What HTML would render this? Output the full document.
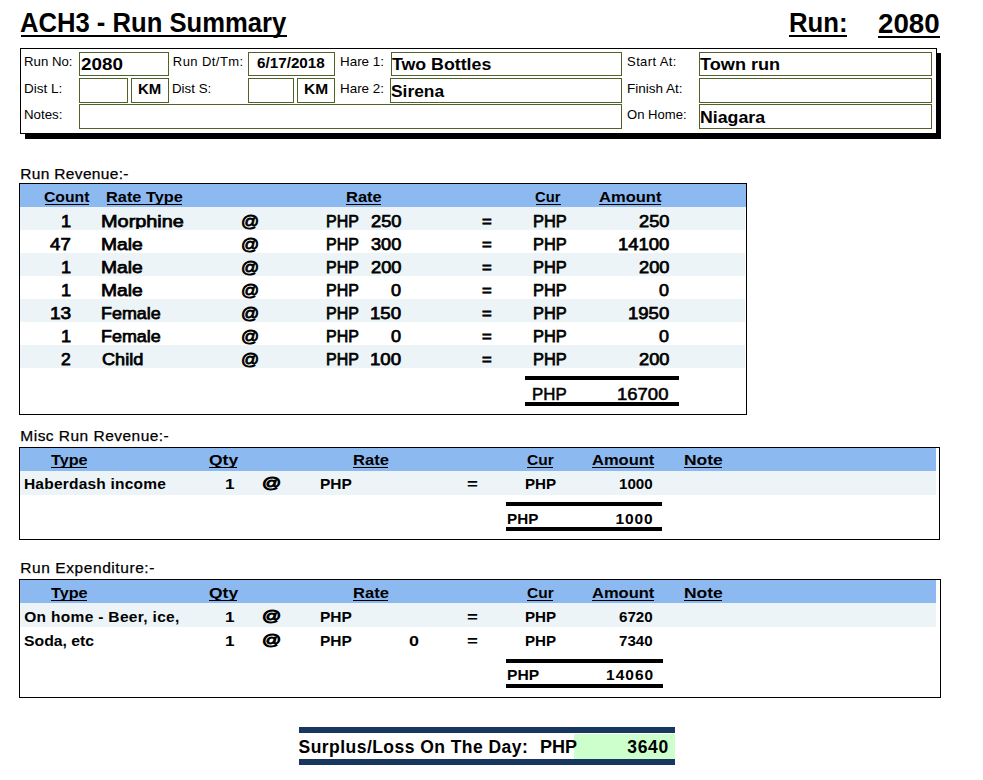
<!DOCTYPE html>
<html><head><meta charset="utf-8"><style>
html,body{margin:0;padding:0;background:#fff;width:983px;height:780px;overflow:hidden;position:relative}
div{position:absolute;box-sizing:border-box}
.t{transform-origin:0 0;font-family:"Liberation Sans",sans-serif;line-height:1;white-space:pre;color:#000}
.ib{border:1px solid #4f6228}
.tb{border:1px solid #000}
.hb{border:1px solid #000;background:#fff}
.u{background:#000}
</style></head><body>
<div class="f" style="left:21px;top:35px;width:266px;height:2px;background:#000"></div>
<div class="f" style="left:789px;top:35px;width:58px;height:2px;background:#000"></div>
<div class="f" style="left:878px;top:36px;width:62px;height:2px;background:#000"></div>
<div class="f" style="left:25px;top:53px;width:916px;height:86px;background:#000"></div>
<div class="hb" style="left:20px;top:48px;width:917px;height:86px"></div>
<div class="ib" style="left:79px;top:52px;width:90px;height:24px"></div>
<div class="ib" style="left:248px;top:52px;width:87px;height:24px"></div>
<div class="ib" style="left:391px;top:52px;width:231px;height:24px"></div>
<div class="ib" style="left:699px;top:52px;width:233px;height:24px"></div>
<div class="ib" style="left:79px;top:78px;width:49px;height:25px"></div>
<div class="ib" style="left:131px;top:78px;width:38px;height:25px"></div>
<div class="ib" style="left:248px;top:78px;width:46px;height:25px"></div>
<div class="ib" style="left:297px;top:78px;width:38px;height:25px"></div>
<div class="ib" style="left:390px;top:78px;width:232px;height:25px"></div>
<div class="ib" style="left:699px;top:78px;width:233px;height:25px"></div>
<div class="ib" style="left:79px;top:104px;width:543px;height:25px"></div>
<div class="ib" style="left:699px;top:104px;width:233px;height:25px"></div>
<div class="tb" style="left:19px;top:183px;width:728px;height:232px"></div>
<div class="f" style="left:20px;top:184px;width:726px;height:23px;background:#8db9f1"></div>
<div class="f" style="left:20px;top:207px;width:725px;height:23px;background:#ecf4f7"></div>
<div class="f" style="left:20px;top:253px;width:725px;height:23px;background:#ecf4f7"></div>
<div class="f" style="left:20px;top:299px;width:725px;height:23px;background:#ecf4f7"></div>
<div class="f" style="left:20px;top:345px;width:725px;height:23px;background:#ecf4f7"></div>
<div class="f" style="left:525px;top:376px;width:154px;height:4px;background:#000"></div>
<div class="f" style="left:525px;top:402px;width:154px;height:4px;background:#000"></div>
<div class="tb" style="left:19px;top:447px;width:921px;height:93px"></div>
<div class="f" style="left:20px;top:448px;width:916px;height:23px;background:#8db9f1"></div>
<div class="f" style="left:20px;top:471px;width:916px;height:24px;background:#ecf4f7"></div>
<div class="f" style="left:506px;top:502px;width:156px;height:4px;background:#000"></div>
<div class="f" style="left:506px;top:527px;width:156px;height:4px;background:#000"></div>
<div class="tb" style="left:19px;top:579px;width:922px;height:119px"></div>
<div class="f" style="left:20px;top:580px;width:916px;height:23px;background:#8db9f1"></div>
<div class="f" style="left:20px;top:603px;width:916px;height:24px;background:#ecf4f7"></div>
<div class="f" style="left:506px;top:659px;width:157px;height:4px;background:#000"></div>
<div class="f" style="left:506px;top:684px;width:157px;height:4px;background:#000"></div>
<div class="f" style="left:299px;top:727px;width:376px;height:6px;background:#17375e"></div>
<div class="f" style="left:299px;top:759px;width:376px;height:6px;background:#17375e"></div>
<div class="f" style="left:574px;top:734px;width:101px;height:25px;background:#ccffcc"></div>
<div class="t" id="t0" style="left:20.17px;top:8.72px;font-size:27.50px;font-weight:bold;transform:scaleX(0.9315);">ACH3 - Run Summary</div>
<div class="t" id="t1" style="left:788.97px;top:8.72px;font-size:27.50px;font-weight:bold;transform:scaleX(0.9351);">Run:</div>
<div class="t" id="t2" style="left:878.33px;top:9.72px;font-size:27.50px;font-weight:bold;transform:scaleX(1.0083);">2080</div>
<div class="t" id="t3" style="left:24.38px;top:55.00px;font-size:13.00px;transform:scaleX(1.0167);">Run No:</div>
<div class="t" id="t4" style="left:24.41px;top:82.00px;font-size:13.00px;transform:scaleX(1.0394);">Dist L:</div>
<div class="t" id="t5" style="left:23.56px;top:108.00px;font-size:13.00px;transform:scaleX(1.0205);">Notes:</div>
<div class="t" id="t6" style="left:172.85px;top:55.00px;font-size:13.00px;letter-spacing:0.426px;">Run Dt/Tm:</div>
<div class="t" id="t7" style="left:171.91px;top:82.00px;font-size:13.00px;transform:scaleX(1.0245);">Dist S:</div>
<div class="t" id="t8" style="left:340.05px;top:55.00px;font-size:13.00px;transform:scaleX(1.0308);">Hare 1:</div>
<div class="t" id="t9" style="left:340.05px;top:82.00px;font-size:13.00px;transform:scaleX(1.0308);">Hare 2:</div>
<div class="t" id="t10" style="left:627.11px;top:55.00px;font-size:13.00px;letter-spacing:0.366px;">Start At:</div>
<div class="t" id="t11" style="left:627.01px;top:82.00px;font-size:13.00px;transform:scaleX(1.0393);">Finish At:</div>
<div class="t" id="t12" style="left:627.03px;top:108.00px;font-size:13.00px;transform:scaleX(1.0064);">On Home:</div>
<div class="t" id="t13" style="left:81.05px;top:55.61px;font-size:17.00px;font-weight:bold;transform:scaleX(1.1073);">2080</div>
<div class="t" id="t14" style="left:137.97px;top:81.30px;font-size:15.00px;font-weight:bold;transform:scaleX(0.9985);">KM</div>
<div class="t" id="t15" style="left:256.83px;top:55.30px;font-size:15.00px;font-weight:bold;transform:scaleX(1.0157);">6/17/2018</div>
<div class="t" id="t16" style="left:303.89px;top:81.30px;font-size:15.00px;font-weight:bold;transform:scaleX(1.0354);">KM</div>
<div class="t" id="t17" style="left:391.72px;top:55.61px;font-size:17.00px;font-weight:bold;transform:scaleX(1.0446);">Two Bottles</div>
<div class="t" id="t18" style="left:390.63px;top:82.61px;font-size:17.00px;font-weight:bold;transform:scaleX(1.0214);">Sirena</div>
<div class="t" id="t19" style="left:700.48px;top:55.61px;font-size:17.00px;font-weight:bold;transform:scaleX(1.0658);">Town run</div>
<div class="t" id="t20" style="left:699.67px;top:108.61px;font-size:17.00px;font-weight:bold;transform:scaleX(1.0437);">Niagara</div>
<div class="t" id="t21" style="left:20.34px;top:165.88px;font-size:15.50px;-webkit-text-stroke:0.25px #000;letter-spacing:0.321px;">Run Revenue:-</div>
<div class="t" id="t22" style="left:20.35px;top:427.88px;font-size:15.50px;-webkit-text-stroke:0.25px #000;letter-spacing:0.471px;">Misc Run Revenue:-</div>
<div class="t" id="t23" style="left:20.34px;top:559.88px;font-size:15.50px;-webkit-text-stroke:0.25px #000;letter-spacing:0.572px;">Run Expenditure:-</div>
<div class="t" id="t24" style="left:43.82px;top:189.30px;font-size:15.00px;font-weight:bold;transform:scaleX(1.0495);">Count</div>
<div class="u" style="left:45px;top:204px;width:44px;height:1px"></div>
<div class="t" id="t25" style="left:106.18px;top:189.30px;font-size:15.00px;font-weight:bold;transform:scaleX(1.0895);">Rate Type</div>
<div class="u" style="left:107px;top:204px;width:75px;height:1px"></div>
<div class="t" id="t26" style="left:345.63px;top:189.30px;font-size:15.00px;font-weight:bold;transform:scaleX(1.1011);">Rate</div>
<div class="u" style="left:346px;top:204px;width:35px;height:1px"></div>
<div class="t" id="t27" style="left:535.15px;top:189.30px;font-size:15.00px;font-weight:bold;transform:scaleX(0.9821);">Cur</div>
<div class="u" style="left:536px;top:204px;width:25px;height:1px"></div>
<div class="t" id="t28" style="left:599.48px;top:189.30px;font-size:15.00px;font-weight:bold;transform:scaleX(1.1026);">Amount</div>
<div class="u" style="left:599px;top:204px;width:62px;height:1px"></div>
<div class="t" id="t29" style="left:60.62px;top:213.36px;font-size:17.10px;-webkit-text-stroke:0.75px #000;transform:scaleX(1.0637);">1</div>
<div class="t" id="t30" style="left:101.48px;top:213.36px;font-size:17.10px;-webkit-text-stroke:0.75px #000;transform:scaleX(1.1634);clip-path:inset(0 0 1.46px 0);">Morphine</div>
<div class="t" id="t31" style="left:241.10px;top:213.36px;font-size:17.10px;-webkit-text-stroke:0.85px #000;transform:scaleX(1.0477);">@</div>
<div class="t" id="t32" style="left:326.09px;top:213.36px;font-size:17.10px;-webkit-text-stroke:0.75px #000;transform:scaleX(0.9332);">PHP</div>
<div class="t" id="t33" style="left:370.85px;top:213.36px;font-size:17.10px;-webkit-text-stroke:0.75px #000;transform:scaleX(1.0667);">250</div>
<div class="t" id="t34" style="left:481.73px;top:213.36px;font-size:17.10px;-webkit-text-stroke:0.85px #000;transform:scaleX(0.9743);">=</div>
<div class="t" id="t35" style="left:533.31px;top:213.36px;font-size:17.10px;-webkit-text-stroke:0.75px #000;transform:scaleX(0.9585);">PHP</div>
<div class="t" id="t36" style="left:638.64px;top:213.36px;font-size:17.10px;-webkit-text-stroke:0.75px #000;transform:scaleX(1.0656);">250</div>
<div class="t" id="t37" style="left:50.32px;top:236.36px;font-size:17.10px;-webkit-text-stroke:0.75px #000;transform:scaleX(1.0922);">47</div>
<div class="t" id="t38" style="left:100.71px;top:236.36px;font-size:17.10px;-webkit-text-stroke:0.75px #000;transform:scaleX(1.1269);">Male</div>
<div class="t" id="t39" style="left:241.10px;top:236.36px;font-size:17.10px;-webkit-text-stroke:0.85px #000;transform:scaleX(1.0477);">@</div>
<div class="t" id="t40" style="left:326.09px;top:236.36px;font-size:17.10px;-webkit-text-stroke:0.75px #000;transform:scaleX(0.9332);">PHP</div>
<div class="t" id="t41" style="left:370.64px;top:236.36px;font-size:17.10px;-webkit-text-stroke:0.75px #000;transform:scaleX(1.0601);">300</div>
<div class="t" id="t42" style="left:481.73px;top:236.36px;font-size:17.10px;-webkit-text-stroke:0.85px #000;transform:scaleX(0.9743);">=</div>
<div class="t" id="t43" style="left:533.31px;top:236.36px;font-size:17.10px;-webkit-text-stroke:0.75px #000;transform:scaleX(0.9585);">PHP</div>
<div class="t" id="t44" style="left:617.65px;top:236.36px;font-size:17.10px;-webkit-text-stroke:0.75px #000;transform:scaleX(1.0809);">14100</div>
<div class="t" id="t45" style="left:60.62px;top:259.36px;font-size:17.10px;-webkit-text-stroke:0.75px #000;transform:scaleX(1.0637);">1</div>
<div class="t" id="t46" style="left:100.71px;top:259.36px;font-size:17.10px;-webkit-text-stroke:0.75px #000;transform:scaleX(1.1269);">Male</div>
<div class="t" id="t47" style="left:241.10px;top:259.36px;font-size:17.10px;-webkit-text-stroke:0.85px #000;transform:scaleX(1.0477);">@</div>
<div class="t" id="t48" style="left:326.09px;top:259.36px;font-size:17.10px;-webkit-text-stroke:0.75px #000;transform:scaleX(0.9332);">PHP</div>
<div class="t" id="t49" style="left:370.85px;top:259.36px;font-size:17.10px;-webkit-text-stroke:0.75px #000;transform:scaleX(1.0667);">200</div>
<div class="t" id="t50" style="left:481.73px;top:259.36px;font-size:17.10px;-webkit-text-stroke:0.85px #000;transform:scaleX(0.9743);">=</div>
<div class="t" id="t51" style="left:533.31px;top:259.36px;font-size:17.10px;-webkit-text-stroke:0.75px #000;transform:scaleX(0.9585);">PHP</div>
<div class="t" id="t52" style="left:638.64px;top:259.36px;font-size:17.10px;-webkit-text-stroke:0.75px #000;transform:scaleX(1.0656);">200</div>
<div class="t" id="t53" style="left:60.62px;top:282.36px;font-size:17.10px;-webkit-text-stroke:0.75px #000;transform:scaleX(1.0637);">1</div>
<div class="t" id="t54" style="left:100.71px;top:282.36px;font-size:17.10px;-webkit-text-stroke:0.75px #000;transform:scaleX(1.1269);">Male</div>
<div class="t" id="t55" style="left:241.10px;top:282.36px;font-size:17.10px;-webkit-text-stroke:0.85px #000;transform:scaleX(1.0477);">@</div>
<div class="t" id="t56" style="left:326.09px;top:282.36px;font-size:17.10px;-webkit-text-stroke:0.75px #000;transform:scaleX(0.9332);">PHP</div>
<div class="t" id="t57" style="left:390.95px;top:282.36px;font-size:17.10px;-webkit-text-stroke:0.75px #000;transform:scaleX(1.0555);">0</div>
<div class="t" id="t58" style="left:481.73px;top:282.36px;font-size:17.10px;-webkit-text-stroke:0.85px #000;transform:scaleX(0.9743);">=</div>
<div class="t" id="t59" style="left:533.31px;top:282.36px;font-size:17.10px;-webkit-text-stroke:0.75px #000;transform:scaleX(0.9585);">PHP</div>
<div class="t" id="t60" style="left:659.00px;top:282.36px;font-size:17.10px;-webkit-text-stroke:0.75px #000;transform:scaleX(1.0463);">0</div>
<div class="t" id="t61" style="left:49.70px;top:305.36px;font-size:17.10px;-webkit-text-stroke:0.75px #000;transform:scaleX(1.1113);">13</div>
<div class="t" id="t62" style="left:101.13px;top:305.36px;font-size:17.10px;-webkit-text-stroke:0.75px #000;transform:scaleX(1.0477);">Female</div>
<div class="t" id="t63" style="left:241.10px;top:305.36px;font-size:17.10px;-webkit-text-stroke:0.85px #000;transform:scaleX(1.0477);">@</div>
<div class="t" id="t64" style="left:326.09px;top:305.36px;font-size:17.10px;-webkit-text-stroke:0.75px #000;transform:scaleX(0.9332);">PHP</div>
<div class="t" id="t65" style="left:370.13px;top:305.36px;font-size:17.10px;-webkit-text-stroke:0.75px #000;transform:scaleX(1.0909);">150</div>
<div class="t" id="t66" style="left:481.73px;top:305.36px;font-size:17.10px;-webkit-text-stroke:0.85px #000;transform:scaleX(0.9743);">=</div>
<div class="t" id="t67" style="left:533.31px;top:305.36px;font-size:17.10px;-webkit-text-stroke:0.75px #000;transform:scaleX(0.9585);">PHP</div>
<div class="t" id="t68" style="left:628.24px;top:305.36px;font-size:17.10px;-webkit-text-stroke:0.75px #000;transform:scaleX(1.0826);">1950</div>
<div class="t" id="t69" style="left:60.62px;top:328.36px;font-size:17.10px;-webkit-text-stroke:0.75px #000;transform:scaleX(1.0637);">1</div>
<div class="t" id="t70" style="left:101.13px;top:328.36px;font-size:17.10px;-webkit-text-stroke:0.75px #000;transform:scaleX(1.0477);">Female</div>
<div class="t" id="t71" style="left:241.10px;top:328.36px;font-size:17.10px;-webkit-text-stroke:0.85px #000;transform:scaleX(1.0477);">@</div>
<div class="t" id="t72" style="left:326.09px;top:328.36px;font-size:17.10px;-webkit-text-stroke:0.75px #000;transform:scaleX(0.9332);">PHP</div>
<div class="t" id="t73" style="left:390.95px;top:328.36px;font-size:17.10px;-webkit-text-stroke:0.75px #000;transform:scaleX(1.0555);">0</div>
<div class="t" id="t74" style="left:481.73px;top:328.36px;font-size:17.10px;-webkit-text-stroke:0.85px #000;transform:scaleX(0.9743);">=</div>
<div class="t" id="t75" style="left:533.31px;top:328.36px;font-size:17.10px;-webkit-text-stroke:0.75px #000;transform:scaleX(0.9585);">PHP</div>
<div class="t" id="t76" style="left:659.00px;top:328.36px;font-size:17.10px;-webkit-text-stroke:0.75px #000;transform:scaleX(1.0463);">0</div>
<div class="t" id="t77" style="left:61.33px;top:351.36px;font-size:17.10px;-webkit-text-stroke:0.75px #000;transform:scaleX(1.0264);">2</div>
<div class="t" id="t78" style="left:102.09px;top:351.36px;font-size:17.10px;-webkit-text-stroke:0.75px #000;transform:scaleX(1.0617);">Child</div>
<div class="t" id="t79" style="left:241.10px;top:351.36px;font-size:17.10px;-webkit-text-stroke:0.85px #000;transform:scaleX(1.0477);">@</div>
<div class="t" id="t80" style="left:326.09px;top:351.36px;font-size:17.10px;-webkit-text-stroke:0.75px #000;transform:scaleX(0.9332);">PHP</div>
<div class="t" id="t81" style="left:370.13px;top:351.36px;font-size:17.10px;-webkit-text-stroke:0.75px #000;transform:scaleX(1.0909);">100</div>
<div class="t" id="t82" style="left:481.73px;top:351.36px;font-size:17.10px;-webkit-text-stroke:0.85px #000;transform:scaleX(0.9743);">=</div>
<div class="t" id="t83" style="left:533.31px;top:351.36px;font-size:17.10px;-webkit-text-stroke:0.75px #000;transform:scaleX(0.9585);">PHP</div>
<div class="t" id="t84" style="left:638.64px;top:351.36px;font-size:17.10px;-webkit-text-stroke:0.75px #000;transform:scaleX(1.0656);">200</div>
<div class="t" id="t85" style="left:531.86px;top:386.61px;font-size:16.80px;-webkit-text-stroke:0.55px #000;transform:scaleX(1.0040);">PHP</div>
<div class="t" id="t86" style="left:616.81px;top:386.61px;font-size:16.80px;-webkit-text-stroke:0.55px #000;transform:scaleX(1.1019);">16700</div>
<div class="t" id="t87" style="left:51.34px;top:452.30px;font-size:15.00px;font-weight:bold;transform:scaleX(1.0800);">Type</div>
<div class="u" style="left:51px;top:467px;width:36px;height:1px"></div>
<div class="t" id="t88" style="left:208.78px;top:452.30px;font-size:15.00px;font-weight:bold;transform:scaleX(1.1650);">Qty</div>
<div class="u" style="left:209px;top:467px;width:28px;height:1px"></div>
<div class="t" id="t89" style="left:352.61px;top:452.30px;font-size:15.00px;font-weight:bold;transform:scaleX(1.1046);">Rate</div>
<div class="u" style="left:353px;top:467px;width:35px;height:1px"></div>
<div class="t" id="t90" style="left:527.03px;top:452.30px;font-size:15.00px;font-weight:bold;transform:scaleX(1.0339);">Cur</div>
<div class="u" style="left:527px;top:467px;width:26px;height:1px"></div>
<div class="t" id="t91" style="left:591.68px;top:452.30px;font-size:15.00px;font-weight:bold;transform:scaleX(1.1002);">Amount</div>
<div class="u" style="left:592px;top:467px;width:62px;height:1px"></div>
<div class="t" id="t92" style="left:684.07px;top:452.30px;font-size:15.00px;font-weight:bold;transform:scaleX(1.1644);">Note</div>
<div class="u" style="left:684px;top:467px;width:38px;height:1px"></div>
<div class="t" id="t93" style="left:23.96px;top:475.88px;font-size:15.50px;font-weight:bold;letter-spacing:0.217px;">Haberdash income</div>
<div class="t" id="t94" style="left:225.35px;top:475.88px;font-size:15.50px;font-weight:bold;transform:scaleX(1.1058);">1</div>
<div class="t" id="t95" style="left:261.50px;top:474.88px;font-size:15.50px;-webkit-text-stroke:1.00px #000;transform:scaleX(1.2215);">@</div>
<div class="t" id="t96" style="left:320.27px;top:475.88px;font-size:15.50px;font-weight:bold;transform:scaleX(0.9988);">PHP</div>
<div class="t" id="t97" style="left:466.72px;top:475.88px;font-size:15.50px;font-weight:bold;transform:scaleX(1.1999);">=</div>
<div class="t" id="t98" style="left:524.92px;top:475.88px;font-size:15.50px;font-weight:bold;transform:scaleX(0.9769);">PHP</div>
<div class="t" id="t99" style="left:618.82px;top:475.88px;font-size:15.50px;font-weight:bold;transform:scaleX(0.9782);">1000</div>
<div class="t" id="t100" style="left:507.05px;top:510.88px;font-size:15.50px;font-weight:bold;transform:scaleX(0.9825);">PHP</div>
<div class="t" id="t101" style="left:615.43px;top:510.88px;font-size:15.50px;font-weight:bold;letter-spacing:0.930px;">1000</div>
<div class="t" id="t102" style="left:51.34px;top:585.30px;font-size:15.00px;font-weight:bold;transform:scaleX(1.0800);">Type</div>
<div class="u" style="left:51px;top:600px;width:36px;height:1px"></div>
<div class="t" id="t103" style="left:208.78px;top:585.30px;font-size:15.00px;font-weight:bold;transform:scaleX(1.1650);">Qty</div>
<div class="u" style="left:209px;top:600px;width:28px;height:1px"></div>
<div class="t" id="t104" style="left:352.61px;top:585.30px;font-size:15.00px;font-weight:bold;transform:scaleX(1.1046);">Rate</div>
<div class="u" style="left:353px;top:600px;width:35px;height:1px"></div>
<div class="t" id="t105" style="left:527.03px;top:585.30px;font-size:15.00px;font-weight:bold;transform:scaleX(1.0339);">Cur</div>
<div class="u" style="left:527px;top:600px;width:26px;height:1px"></div>
<div class="t" id="t106" style="left:591.68px;top:585.30px;font-size:15.00px;font-weight:bold;transform:scaleX(1.1002);">Amount</div>
<div class="u" style="left:592px;top:600px;width:62px;height:1px"></div>
<div class="t" id="t107" style="left:684.07px;top:585.30px;font-size:15.00px;font-weight:bold;transform:scaleX(1.1644);">Note</div>
<div class="u" style="left:684px;top:600px;width:38px;height:1px"></div>
<div class="t" id="t108" style="left:24.26px;top:608.88px;font-size:15.50px;font-weight:bold;letter-spacing:0.318px;">On home - Beer, ice,</div>
<div class="t" id="t109" style="left:225.35px;top:608.88px;font-size:15.50px;font-weight:bold;transform:scaleX(1.1058);">1</div>
<div class="t" id="t110" style="left:261.50px;top:607.88px;font-size:15.50px;-webkit-text-stroke:1.00px #000;transform:scaleX(1.2215);">@</div>
<div class="t" id="t111" style="left:320.27px;top:608.88px;font-size:15.50px;font-weight:bold;transform:scaleX(0.9988);">PHP</div>
<div class="t" id="t112" style="left:466.72px;top:608.88px;font-size:15.50px;font-weight:bold;transform:scaleX(1.1999);">=</div>
<div class="t" id="t113" style="left:524.92px;top:608.88px;font-size:15.50px;font-weight:bold;transform:scaleX(0.9769);">PHP</div>
<div class="t" id="t114" style="left:618.82px;top:608.88px;font-size:15.50px;font-weight:bold;transform:scaleX(0.9782);">6720</div>
<div class="t" id="t115" style="left:24.10px;top:632.88px;font-size:15.50px;font-weight:bold;transform:scaleX(1.0180);">Soda, etc</div>
<div class="t" id="t116" style="left:225.35px;top:632.88px;font-size:15.50px;font-weight:bold;transform:scaleX(1.1058);">1</div>
<div class="t" id="t117" style="left:261.50px;top:631.88px;font-size:15.50px;-webkit-text-stroke:1.00px #000;transform:scaleX(1.2215);">@</div>
<div class="t" id="t118" style="left:320.27px;top:632.88px;font-size:15.50px;font-weight:bold;transform:scaleX(0.9988);">PHP</div>
<div class="t" id="t119" style="left:408.75px;top:632.88px;font-size:15.50px;font-weight:bold;transform:scaleX(1.1588);">0</div>
<div class="t" id="t120" style="left:466.72px;top:632.88px;font-size:15.50px;font-weight:bold;transform:scaleX(1.1999);">=</div>
<div class="t" id="t121" style="left:524.92px;top:632.88px;font-size:15.50px;font-weight:bold;transform:scaleX(0.9769);">PHP</div>
<div class="t" id="t122" style="left:618.82px;top:632.88px;font-size:15.50px;font-weight:bold;transform:scaleX(0.9782);">7340</div>
<div class="t" id="t123" style="left:506.86px;top:666.88px;font-size:15.50px;font-weight:bold;transform:scaleX(1.0084);">PHP</div>
<div class="t" id="t124" style="left:606.05px;top:666.88px;font-size:15.50px;font-weight:bold;letter-spacing:1.000px;">14060</div>
<div class="t" id="t125" style="left:298.57px;top:739.19px;font-size:17.50px;font-weight:bold;letter-spacing:0.453px;">Surplus/Loss On The Day:</div>
<div class="t" id="t126" style="left:539.70px;top:739.19px;font-size:17.50px;font-weight:bold;transform:scaleX(1.0301);">PHP</div>
<div class="t" id="t127" style="left:627.20px;top:739.19px;font-size:17.50px;font-weight:bold;letter-spacing:0.719px;z-index:2;">3640</div>

</body></html>
